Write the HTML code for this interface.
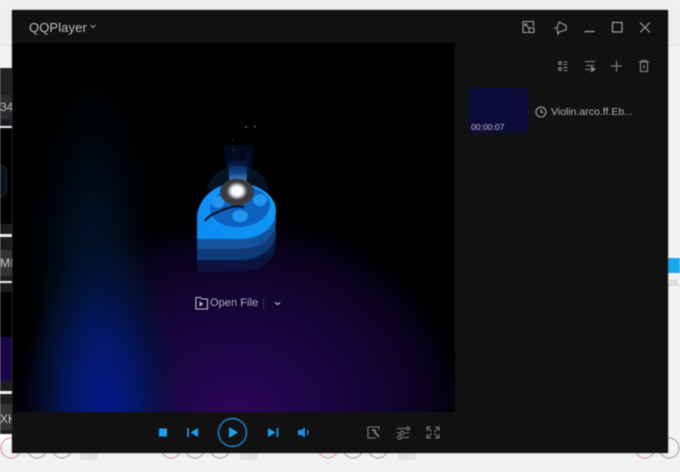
<!DOCTYPE html>
<html><head><meta charset="utf-8"><style>
html,body{margin:0;padding:0;width:680px;height:472px;overflow:hidden;background:#f2f2f2;font-family:"Liberation Sans",sans-serif}
#w{position:absolute;left:0;top:0;width:680px;height:472px;overflow:hidden;filter:blur(.4px)}
.a{position:absolute}
svg{position:absolute;left:0;top:0}
</style></head><body><div id="w">
<div class="a" style="left:0;top:0;width:680px;height:45px;background:#efefef"></div>
<div class="a" style="left:660px;top:45px;width:20px;height:1px;background:#ddd"></div>
<div class="a" style="left:0;top:45px;width:14px;height:1px;background:#ddd"></div>

<div class="a" style="left:0;top:68px;width:13px;height:156px;background:#000"></div>
<div class="a" style="left:0;top:68px;width:13px;height:27px;background:#202022"></div>
<div class="a" style="left:0;top:95px;width:13px;height:24px;background:#2c2c30"></div>
<div class="a" style="left:0;top:119px;width:13px;height:7px;background:#1c1c22"></div>
<div class="a" style="left:0;top:126px;width:13px;height:2px;background:#eee"></div>
<div class="a" style="left:0;top:100px;width:13px;font-size:12px;color:#bbb;overflow:hidden;white-space:nowrap">34</div>
<div class="a" style="left:-6px;top:165px;width:11px;height:30px;background:#0a121a;border-radius:15px;border:1px solid #1c2a38"></div>
<div class="a" style="left:0;top:224px;width:13px;height:68px;background:#1c1c1e"></div>
<div class="a" style="left:0;top:234px;width:13px;height:3px;background:#eee"></div>
<div class="a" style="left:0;top:250px;width:13px;height:26px;background:#333"></div>
<div class="a" style="left:0;top:256px;width:13px;font-size:12px;color:#ccc;overflow:hidden;white-space:nowrap">MI</div>
<div class="a" style="left:0;top:281px;width:13px;height:2px;background:#eee"></div>
<div class="a" style="left:0;top:292px;width:13px;height:45px;background:#000"></div>
<div class="a" style="left:0;top:337px;width:13px;height:44px;background:#1c0848"></div>
<div class="a" style="left:0;top:381px;width:13px;height:53px;background:#1c1c1e"></div>
<div class="a" style="left:0;top:391px;width:13px;height:3px;background:#eee"></div>
<div class="a" style="left:0;top:404px;width:13px;height:26px;background:#333"></div>
<div class="a" style="left:0;top:412px;width:13px;font-size:12px;color:#ccc;overflow:hidden;white-space:nowrap">XH</div>
<div class="a" style="left:0;top:434px;width:13px;height:9px;background:#fff"></div>
<div class="a" style="left:667px;top:258px;width:13px;height:15px;background:#18a8ee"></div>
<div class="a" style="left:668px;top:278px;width:12px;font-size:9px;color:#bbb;overflow:hidden;white-space:nowrap">26.</div>

<svg width="680" height="472" fill="none" stroke-width="1">
<g fill="#e2e2e2"><rect x="240" y="450" width="18" height="10"/><rect x="398" y="450" width="18" height="10"/><rect x="80" y="450" width="18" height="10"/></g>
<g stroke="#d88"><circle cx="11" cy="448" r="10"/><circle cx="171" cy="448" r="10"/><circle cx="328" cy="448" r="10"/><circle cx="645" cy="448" r="10"/></g>
<g stroke="#999"><circle cx="37" cy="448" r="10"/><circle cx="62" cy="448" r="10"/><circle cx="195" cy="448" r="10"/><circle cx="220" cy="448" r="10"/><circle cx="353" cy="448" r="10"/><circle cx="378" cy="448" r="10"/><circle cx="669" cy="448" r="10"/></g>
</svg>

<div class="a" style="left:12px;top:10px;width:656px;height:443px;background:#111;box-shadow:0 0 1px #555"></div>
<div class="a" style="left:29px;top:19.500px;font-size:13px;color:#bdbdbd;letter-spacing:.1px">QQPlayer</div>
<svg width="680" height="472" fill="none" stroke="#a0a0a0" stroke-width="1.100">
<path d="M90.500 25l2.500 2.500L95.500 25"/>
<path d="M533.500 26v-4.500h-10.500v11h5"/><path d="M525 24l3.500 3.500M525 24h2.500M525 24v2.500"/><rect x="529" y="28" width="5" height="4.500"/>
<path d="M554 28h3M557 28l2-6 7 3.500v4.500l-7 2-1 2.500z" stroke-linejoin="round"/>
<path d="M584.500 31.500h10" stroke-width="1.300"/>
<rect x="612.500" y="22.500" width="9.500" height="9.500" stroke-width="1.200"/>
<path d="M640 22.500l10 10M650 22.500l-10 10" stroke-width="1.200"/>
</svg>

<div class="a" style="left:13px;top:43px;width:442px;height:369px;background:
radial-gradient(ellipse 78px 170px at 92px 369px,rgba(3,22,140,.95) 0%,rgba(3,24,115,.85) 40%,rgba(2,20,70,.45) 75%,rgba(0,0,0,0) 100%),
radial-gradient(ellipse 70px 290px at 80px 300px,rgba(2,26,70,.85) 0%,rgba(1,20,45,.6) 50%,rgba(0,10,20,.35) 80%,rgba(0,0,0,0) 100%),
radial-gradient(ellipse 228px 195px at 225px 369px,#2a0558 0%,#1c0644 35%,#100430 65%,#080218 88%,rgba(0,0,0,0) 100%),#000"></div>

<svg width="680" height="472">
<defs>
<linearGradient id="b" x1="0" y1="0" x2="0" y2="1"><stop offset="0" stop-color="#0a2f80" stop-opacity=".15"/><stop offset=".5" stop-color="#1a5cb0" stop-opacity=".8"/><stop offset="1" stop-color="#a8dcff"/></linearGradient>
<linearGradient id="t" x1="0" y1="1" x2="1" y2="0"><stop offset="0" stop-color="#0c8af2"/><stop offset="1" stop-color="#129cf8"/></linearGradient>
<linearGradient id="s" x1="0" y1="0" x2="0" y2="1"><stop offset="0" stop-color="#0c2a62"/><stop offset="1" stop-color="#0a1e4e" stop-opacity=".5"/></linearGradient>
<radialGradient id="g"><stop offset="0" stop-color="#fff"/><stop offset=".5" stop-color="#f4f8fc"/><stop offset=".8" stop-color="#9aa0a8" stop-opacity=".7"/><stop offset="1" stop-color="#444" stop-opacity="0"/></radialGradient>
<path id="T" d="M197 239V218C197 200 214 183 236 183C258 183 276 195 276 211C276 226 262 239 240 239Z"/>
</defs>
<path d="M224 145h30l-2 25h-26z" fill="#06184a" opacity=".4"/>
<path d="M207 190c2-14 15-24 31-24s29 10 31 24z" fill="#0a3058" opacity=".4"/>
<use href="#T" y="33" fill="url(#s)"/>
<use href="#T" y="21" fill="#0f3a78"/>
<use href="#T" y="10" fill="#13539d"/>
<use href="#T" fill="url(#t)"/>
<ellipse cx="240" cy="207" rx="30" ry="20" transform="rotate(-6 240 207)" fill="#0d62c0"/>
<ellipse cx="218" cy="202" rx="6.500" ry="6" fill="#2296ee"/>
<ellipse cx="260" cy="200" rx="7" ry="6" fill="#2296ee"/>
<ellipse cx="240" cy="216" rx="8" ry="6" fill="#2296ee"/>
<path d="M228 160h20l-2 28h-16z" fill="url(#b)"/>
<ellipse cx="237" cy="192" rx="17" ry="13.500" fill="#3a3a3e"/>
<ellipse cx="237" cy="191" rx="11" ry="9.500" fill="url(#g)"/>
<path d="M205 221c3-5 10-8 15-10 7-3 14-6 24-4" fill="none" stroke="#0a1426" stroke-width="2.200"/>
<circle cx="246" cy="127" r="1" fill="#1d8a60"/><circle cx="255" cy="126.500" r="1" fill="#1d8a60"/><circle cx="233" cy="140" r=".8" fill="#223a90"/><circle cx="233" cy="150" r=".8" fill="#223a90"/><circle cx="248" cy="154" r=".8" fill="#223a90"/>
<path d="M196 297.500h4.500l1.500 1.500h5.500v10h-11.500z" fill="none" stroke="#c0bcc6" stroke-width="1.100"/>
<path d="M199.500 301.500l4 2.500-4 2.500z" fill="#c0bcc6"/>
<rect x="263" y="298" width="1" height="11" fill="#3a2c4a"/>
<path d="M275 302.500l2.500 2 2.500-2" fill="none" stroke="#bbb" stroke-width="1.200"/>
</svg>
<div class="a" style="left:210px;top:297px;font-size:11px;color:#b4aebc;letter-spacing:.05px">Open File</div>

<svg width="680" height="472" fill="none" stroke="#8c8c8c" stroke-width="1.100">
<circle cx="560" cy="63" r="1.400"/><circle cx="560" cy="69" r="1.400"/><path d="M563.500 62h4M563.500 64.500h4M563.500 67.500h4M563.500 70.500h4"/>
<path d="M585 61.500h10M586 65.500h8M585 69.500h5"/><path d="M591.500 67v4.500l3.500-2.200z" fill="#8c8c8c"/>
<path d="M616.500 61v10.500M611 66h11"/>
<path d="M639 62h10M641.500 62v-1.500h5V62M640.500 62v9.500h7V62M644 65v3.500"/>
<circle cx="541" cy="112" r="5" stroke="#a8a8a8"/><path d="M541 109v3.300h2.500" stroke="#a8a8a8"/>
</svg>
<div class="a" style="left:469px;top:88px;width:59px;height:45px;background:#0e0a3a"></div>
<div class="a" style="left:471px;top:121.500px;font-size:8.500px;color:#c4c4c4;letter-spacing:.05px">00:00:07</div>
<div class="a" style="left:551px;top:105.500px;font-size:10.500px;color:#b4b4b4">Violin.arco.ff.Eb...</div>

<svg width="680" height="472" fill="none">
<rect x="159" y="428.500" width="8" height="8" fill="#1ea0f0"/>
<path d="M188 428v9" stroke="#1ea0f0" stroke-width="1.600"/><path d="M198 428v9l-7.500-4.500z" fill="#1ea0f0"/>
<circle cx="232.500" cy="432.500" r="14" stroke="#1c88d0" stroke-width="1.400"/>
<path d="M229 427v11l9-5.500z" fill="#1ea0f0"/>
<path d="M268 428v9l7.500-4.500z" fill="#1ea0f0"/><path d="M277.500 428v9" stroke="#1ea0f0" stroke-width="1.600"/>
<path d="M298 430h3l4-2.500v10l-4-2.500h-3z" fill="#1e90e0"/><path d="M307 430c1.500 1.500 1.500 3.500 0 5" stroke="#1e90e0" stroke-width="1.300"/>
<g stroke="#808080" stroke-width="1.100">
<path d="M379 430v-3h-11v11h8"/><path d="M372 429.500l3 1v2l4 4.500" stroke-width="1.800"/>
<path d="M397 428.500h10M397 433h3M405 433h4M402 437.500h7"/><circle cx="408" cy="428.500" r="1.600"/><circle cx="402" cy="433" r="1.800"/><circle cx="399.500" cy="437.500" r="1.800"/>
<path d="M427 431v-4h4M435 427h4v4M427 434v4h4M435 438h4v-4M428 428l3.500 3.500M438 428l-3.500 3.500M428 437l3.500-3.500M438 437l-3.500-3.500"/>
</g>
</svg>
</div></body></html>
